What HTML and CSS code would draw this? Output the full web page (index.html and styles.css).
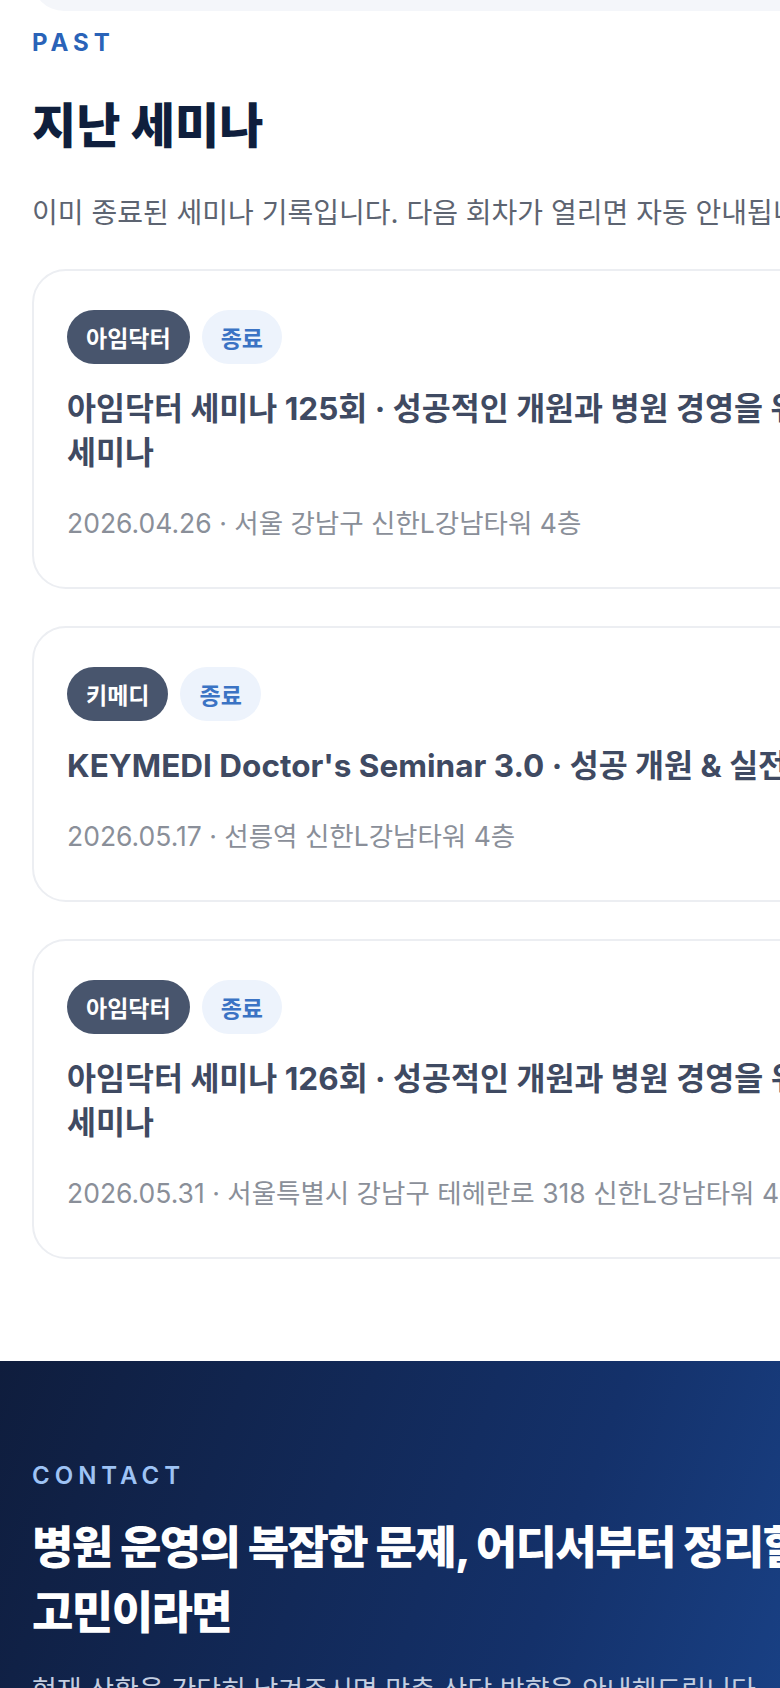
FILE: index.html
```html
<!DOCTYPE html>
<html lang="ko">
<head>
	<meta charset="UTF-8">
	<title>세미나 안내</title>
	<link rel="stylesheet" href="styles.css">
</head>
<body>
	<div class="page">
		<section class="upcoming">
			<div class="upcoming-card"></div>
		</section>

		<section class="past">
			<p class="eyebrow">PAST</p>
			<h2 class="section-title">지난 세미나</h2>
			<p class="section-desc">이미 종료된 세미나 기록입니다. 다음 회차가 열리면 자동 안내됩니다.</p>

			<div class="seminar-list">
				<article class="seminar-card">
					<div class="tags">
						<span class="tag tag-host">아임닥터</span>
						<span class="tag tag-status">종료</span>
					</div>
					<h3 class="seminar-title">아임닥터 세미나 125회 · 성공적인 개원과 병원 경영을 위한 세미나</h3>
					<p class="seminar-meta">2026.04.26 · 서울 강남구 신한L강남타워 4층</p>
				</article>

				<article class="seminar-card">
					<div class="tags">
						<span class="tag tag-host">키메디</span>
						<span class="tag tag-status">종료</span>
					</div>
					<h3 class="seminar-title">KEYMEDI Doctor's Seminar 3.0 · 성공 개원 &amp; 실전 경영</h3>
					<p class="seminar-meta">2026.05.17 · 선릉역 신한L강남타워 4층</p>
				</article>

				<article class="seminar-card">
					<div class="tags">
						<span class="tag tag-host">아임닥터</span>
						<span class="tag tag-status">종료</span>
					</div>
					<h3 class="seminar-title">아임닥터 세미나 126회 · 성공적인 개원과 병원 경영을 위한 세미나</h3>
					<p class="seminar-meta">2026.05.31 · 서울특별시 강남구 테헤란로 318 신한L강남타워 4층</p>
				</article>
			</div>
		</section>

		<section class="contact">
			<p class="eyebrow eyebrow-light">CONTACT</p>
			<h2 class="contact-title">병원 운영의 복잡한 문제, 어디서부터 정리할지 고민이라면</h2>
			<p class="contact-desc">현재 상황을 간단히 남겨주시면 맞춤 상담 방향을 안내해드립니다.</p>
		</section>
	</div>
</body>
</html>
```

FILE: styles.css
```css
html, body {
	overflow-x: hidden;
}

body {
	margin: 0;
	padding: 0;
	background-color: #fff;
	font-family: 'Inter', 'Noto Sans CJK KR', sans-serif;
	word-break: keep-all;
}

.page {
	width: 980px;
}

/* 이전 섹션 카드 끝부분 */
.upcoming {
	padding: 0 32px;
}

.upcoming-card {
	height: 80px;
	margin-top: -69px;
	background-color: #f4f6fa;
	border-radius: 32px;
}

/* 지난 세미나 */
.past {
	padding: 17px 32px 102px;
}

.eyebrow {
	margin: 0;
	font-size: 24px;
	line-height: 29px;
	font-weight: 700;
	letter-spacing: 5px;
	color: #2a63b8;
}

.section-title {
	margin: 39px 0 0;
	font-size: 48px;
	line-height: 60px;
	font-weight: 800;
	color: #0f1f3d;
}

.section-desc {
	margin: 36px 0 0;
	font-size: 28px;
	line-height: 42px;
	color: #5d6471;
}

.seminar-list {
	margin-top: 35px;
	display: flex;
	flex-direction: column;
	gap: 37px;
}

.seminar-card {
	background-color: #fff;
	border: 2px solid #eceef2;
	border-radius: 34px;
	padding: 39px 33px 45px;
}

.tags {
	display: flex;
	gap: 12px;
}

.tag {
	display: inline-flex;
	align-items: center;
	height: 54px;
	padding: 0 19px;
	border-radius: 27px;
	font-size: 23px;
	font-weight: 700;
}

.tag-host {
	background-color: #48556d;
	color: #fff;
}

.tag-status {
	background-color: #edf3fc;
	color: #3b73c4;
}

.seminar-title {
	margin: 23px 0 0;
	font-size: 31.5px;
	line-height: 44px;
	font-weight: 700;
	color: #3f4a62;
}

.seminar-meta {
	margin: 30px 0 0;
	font-size: 26.5px;
	line-height: 37px;
	color: #8a8f99;
}

/* 문의 섹션 */
.contact {
	padding: 100px 32px 120px;
	background: linear-gradient(110deg, #0f1d3d 0%, #14316a 55%, #1d4e9c 100%);
}

.eyebrow-light {
	color: #9ec3f5;
	font-weight: 600;
}

.contact-title {
	margin: 25px 0 0;
	font-size: 45px;
	line-height: 65px;
	font-weight: 800;
	letter-spacing: -0.035em;
	color: #fff;
}

.contact-desc {
	margin: 25px 0 0;
	font-size: 27px;
	line-height: 42px;
	color: #c3cee0;
}
```
